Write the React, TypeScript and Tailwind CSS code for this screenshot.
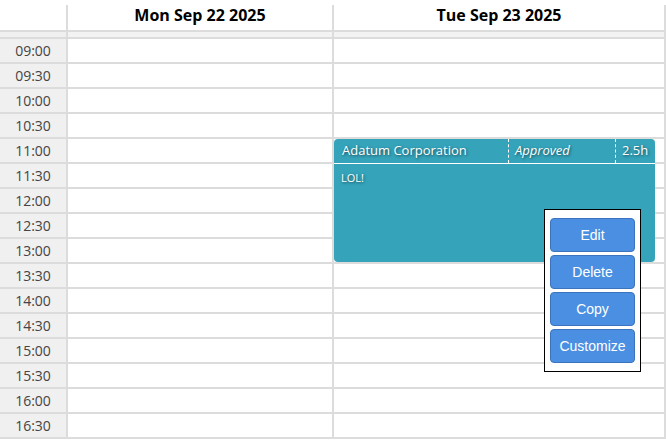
import React from 'react';

const times = [
  '08:30', '09:00', '09:30', '10:00', '10:30', '11:00', '11:30', '12:00', '12:30',
  '13:00', '13:30', '14:00', '14:30', '15:00', '15:30', '16:00', '16:30',
];

const menuItems = ['Edit', 'Delete', 'Copy', 'Customize'];

const DayColumn: React.FC<{ children?: React.ReactNode; className?: string }> = ({ children, className }) => (
  <div className={`relative flex flex-col border-l-2 border-[#dcdcdc] ${className ?? ''}`}>
    {times.map((t, i) => (
      <div
        key={t}
        className={`h-[25px] shrink-0 border-b-2 border-[#dcdcdc] ${i === 0 ? 'bg-[#f3f3f3]' : 'bg-white'}`}
      />
    ))}
    {children}
  </div>
);

export default function App() {
  return (
    <div
      className="relative w-[666px] h-[440px] overflow-hidden bg-white text-[#222]"
      style={{ fontFamily: '"Open Sans", "Noto Sans", sans-serif' }}
    >
      {/* header */}
      <div className="flex h-[32px] border-b-2 border-[#dcdcdc]">
        <div className="w-[66px] shrink-0" />
        <div className="w-[266px] shrink-0 flex items-end justify-center border-l-2 border-[#dcdcdc] mt-[5px] pb-[3px] text-[16px] font-bold text-black">
          Mon Sep 22 2025
        </div>
        <div className="flex-1 flex items-end justify-center border-l-2 border-r-2 border-[#dcdcdc] mt-[5px] pb-[3px] text-[16px] font-bold text-black">
          Tue Sep 23 2025
        </div>
      </div>

      {/* body */}
      <div className="h-[408px] overflow-hidden">
        <div className="flex -mt-[18px]">
          <div className="w-[66px] shrink-0 flex flex-col bg-[#f0f0f0]">
            {times.map((t) => (
              <div
                key={t}
                className="h-[25px] shrink-0 border-b-2 border-[#dcdcdc] flex items-center justify-center text-[14px] text-[#444]"
              >
                {t}
              </div>
            ))}
          </div>
          <DayColumn className="w-[266px] shrink-0" />
          <DayColumn className="flex-1 border-r-2">
            <div className="absolute left-0 top-[125px] w-[321px] h-[123px] rounded-[4px] bg-[#35a4bb] text-white [text-shadow:1px_1px_3px_rgba(0,0,0,0.6)]">
              <div className="flex h-[25px] border-b border-white text-[13px]">
                <div className="w-[174px] pl-[8px] flex items-center">Adatum Corporation</div>
                <div className="w-[107px] pl-[6px] flex items-center italic border-l border-dashed border-white">
                  Approved
                </div>
                <div className="flex-1 pl-[6px] flex items-center border-l border-dashed border-white">2.5h</div>
              </div>
              <div className="pl-[7px] pt-[6px] text-[11px]">LOL!</div>
            </div>
          </DayColumn>
        </div>
      </div>

      {/* context menu */}
      <div
        className="absolute left-[544px] top-[209px] w-[97px] flex flex-col gap-[3px] px-[5px] py-[8px] bg-white border border-black"
        style={{ fontFamily: '"Liberation Sans", Arial, sans-serif' }}
      >
        {menuItems.map((m) => (
          <button
            key={m}
            className="h-[34px] w-full rounded-[4px] bg-[#4a8fe2] border border-[#3b74bd] text-white text-[14px]"
          >
            {m}
          </button>
        ))}
      </div>
    </div>
  );
}
